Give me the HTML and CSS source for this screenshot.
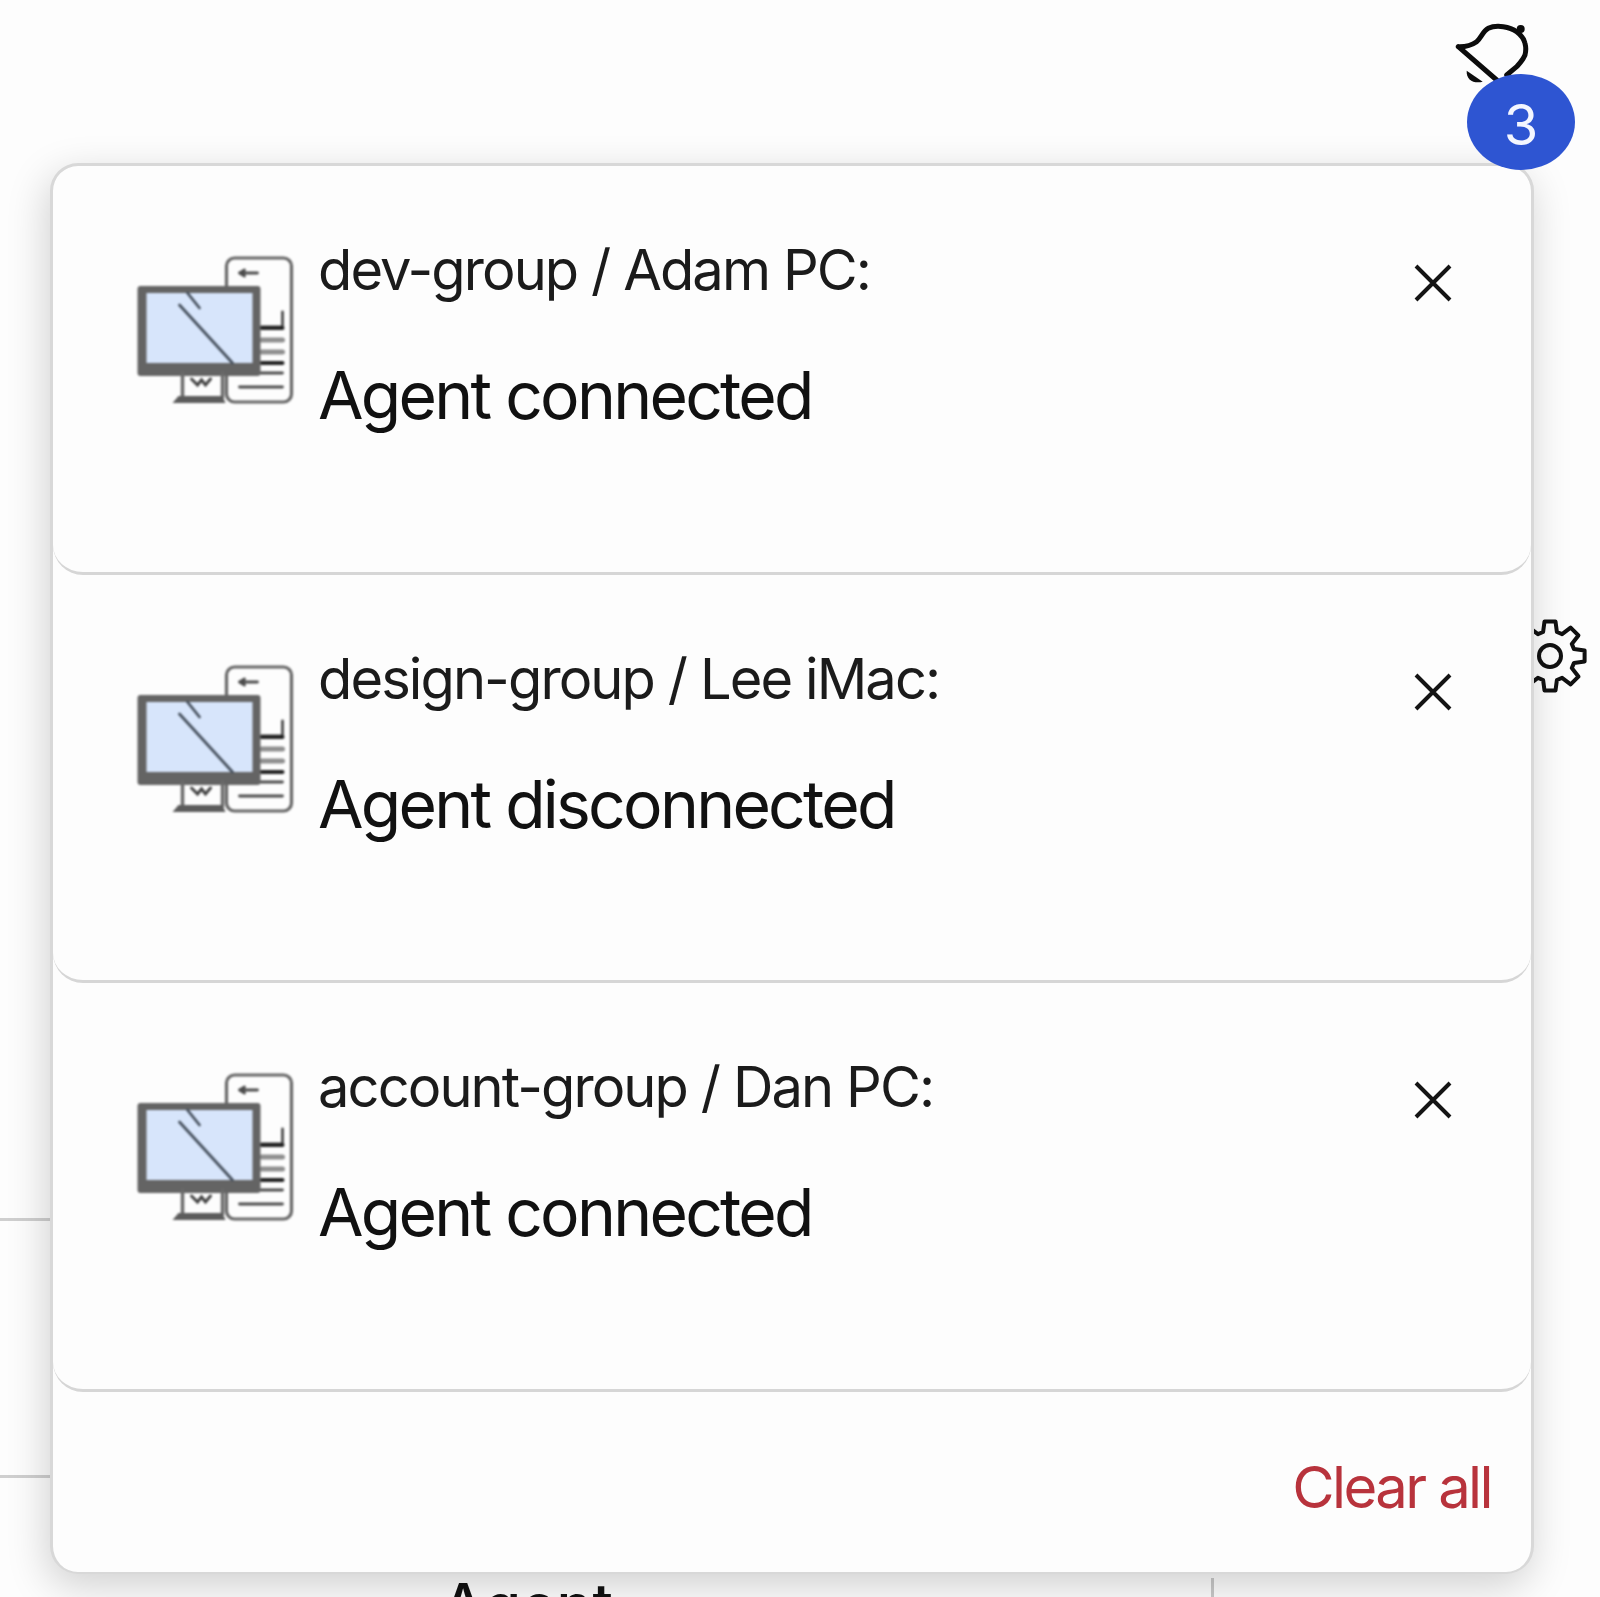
FILE: index.html
```html
<!DOCTYPE html>
<html lang="en">
<head>
<meta charset="utf-8">
<title>Notifications</title>
<link rel="stylesheet" href="styles.css">
</head>
<body>
<svg class="defs" width="0" height="0" aria-hidden="true">
  <defs>
    <symbol id="agent-icon" viewBox="0 0 157 148">
      <rect class="ic-line" x="90" y="2" width="65" height="144" rx="8"/>
      <path class="ic-thin" d="M103 17h18M103 17l5-3M103 17l5 3"/>
      <path class="ic-thin" d="M146 56v15H125"/>
      <path class="ic-slot" d="M125 84h21M125 96h21"/>
      <path class="ic-dark" d="M125 72h21M125 107h21"/>
      <path class="ic-thin" d="M103 117h43M103 131h43"/>
      <rect class="ic-monitor" x="1" y="30" width="123" height="90" rx="3"/>
      <rect class="ic-screen" x="10" y="37" width="106" height="70"/>
      <path class="ic-glare" d="M43 49l53 58M51 37l12 15"/>
      <path class="ic-stand" d="M46 117v24M86 117v24"/>
      <path class="ic-w" d="M55 123l6 6 4-5 4 5 5-6"/>
      <path class="ic-base" d="M42 140h44l3 7H36z"/>
    </symbol>
    <symbol id="close-icon" viewBox="0 0 40 40">
      <path class="x-line" d="M3 3l34 34M37 3L3 37"/>
    </symbol>
  </defs>
</svg>

<div class="page">
  <header class="topbar">
    <div class="bell-wrap">
      <svg class="bell" viewBox="0 0 80 70" aria-hidden="true">
        <path class="bell-line" d="M8.3 26.7C17 27 22 25 26.7 21.7 31 18 33 11 38.3 8.3 43 6 48 6 53.3 6.7 59 7.5 63 9 66.7 11.7 71 15 74 19 75 23.3 76 27 76 31 75 35 73 40 70 43 66.7 46.7L56.7 55M8.3 26.7L46.7 60"/>
        <circle class="bell-fill" cx="70.7" cy="9" r="4"/>
        <path class="bell-fill" d="M16.7 50.7L32.7 61.7C24 64 16 60 16.7 50.7z"/>
      </svg>
      <span class="badge">3</span>
    </div>
  </header>

  <div class="gear-row">
    <svg class="gear" viewBox="-40 -40 80 80" aria-hidden="true">
      <polygon class="gear-line" points="24,-6.9 34.6,-5.5 34.6,5.5 24,6.9 21.8,12.1 28.4,20.6 20.6,28.4 12.1,21.8 6.9,24 5.5,34.6 -5.5,34.6 -6.9,24 -12.1,21.8 -20.6,28.4 -28.4,20.6 -21.8,12.1 -24,6.9 -34.6,5.5 -34.6,-5.5 -24,-6.9 -21.8,-12.1 -28.4,-20.6 -20.6,-28.4 -12.1,-21.8 -6.9,-24 -5.5,-34.6 5.5,-34.6 6.9,-24 12.1,-21.8 20.6,-28.4 28.4,-20.6 21.8,-12.1"/>
      <circle class="gear-line" cx="0" cy="0" r="11"/>
    </svg>
  </div>

  <section class="table">
    <div class="table-row"></div>
    <div class="table-row table-row-last">
      <div class="cell-agent">Agent</div>
      <div class="cell-next"></div>
    </div>
  </section>

  <aside class="panel">
    <article class="note">
      <svg class="agent-icon" aria-hidden="true"><use href="#agent-icon"/></svg>
      <div class="note-text">
        <div class="note-title">dev-group / Adam PC:</div>
        <div class="note-message">Agent connected</div>
      </div>
      <svg class="close" aria-hidden="true"><use href="#close-icon"/></svg>
    </article>
    <article class="note">
      <svg class="agent-icon" aria-hidden="true"><use href="#agent-icon"/></svg>
      <div class="note-text">
        <div class="note-title">design-group / Lee iMac:</div>
        <div class="note-message">Agent disconnected</div>
      </div>
      <svg class="close" aria-hidden="true"><use href="#close-icon"/></svg>
    </article>
    <article class="note">
      <svg class="agent-icon" aria-hidden="true"><use href="#agent-icon"/></svg>
      <div class="note-text">
        <div class="note-title">account-group / Dan PC:</div>
        <div class="note-message">Agent connected</div>
      </div>
      <svg class="close" aria-hidden="true"><use href="#close-icon"/></svg>
    </article>
    <footer class="panel-footer">
      <span class="clear-all">Clear all</span>
    </footer>
  </aside>
</div>
</body>
</html>
```

FILE: styles.css
```css
* { box-sizing: border-box; }
html, body { margin: 0; padding: 0; }
body {
  background: #fdfdfd;
  color: #141414;
  font-family: Inter, "Liberation Sans", sans-serif;
}
.defs { position: absolute; }
.page {
  position: relative;
  width: 1600px;
  height: 1597px;
  overflow: hidden;
  background: #fdfdfd;
  filter: blur(.4px);
}

/* top bar */
.topbar {
  height: 166px;
  display: flex;
  justify-content: flex-end;
  padding: 20px 0 0;
}
.bell-wrap { position: relative; width: 150px; height: 70px; }
.bell { display: block; width: 80px; height: 70px; }
.bell-line {
  fill: none;
  stroke: #0c0c0c;
  stroke-width: 5;
  stroke-linecap: round;
  stroke-linejoin: round;
}
.bell-fill { fill: #0c0c0c; }
.badge {
  position: absolute;
  left: 17px;
  top: 54px;
  width: 108px;
  height: 96px;
  border-radius: 50%;
  background: #2e55d2;
  color: #f4f6ff;
  font-size: 56px;
  line-height: 102px;
  text-align: center;
  z-index: 3;
}

/* settings gear behind the panel */
.gear-row {
  display: flex;
  justify-content: flex-end;
  padding: 450px 10px 0 0;
}
.gear { display: block; width: 80px; height: 80px; }
.gear-line {
  fill: none;
  stroke: #111;
  stroke-width: 4;
  stroke-linejoin: round;
}

/* table behind the panel */
.table { margin-top: 522px; width: 1300px; }
.table-row { height: 257px; border-top: 3px solid #cfcfcf; }
.table-row-last {
  display: grid;
  grid-template-columns: 1211px 1fr;
  padding-top: 97px;
}
.cell-agent {
  font-size: 60px;
  font-weight: 500;
  line-height: 1;
  padding-left: 442px;
  color: #111;
}
.cell-next { border-left: 3px solid #c9c9c9; margin-top: 3px; }

/* notification panel */
.panel {
  position: absolute;
  left: 50px;
  top: 163px;
  width: 1484px;
  height: 1411px;
  background: #fdfdfd;
  border-radius: 28px;
  border: 3px solid #d8d8d8;
  border-bottom-width: 2px;
  box-shadow: -3px 12px 40px rgba(0, 0, 0, .18);
  display: flex;
  flex-direction: column;
  z-index: 2;
}
.note {
  height: 408.5px;
  flex: none;
  display: flex;
  align-items: flex-start;
  padding: 90px 78px 0 83px;
  border-bottom: 3px solid #d6d6d6;
  border-radius: 0 0 30px 30px;
}
.agent-icon { flex: none; width: 158px; height: 148px; filter: blur(.9px); }
.ic-line, .ic-thin, .ic-slot, .ic-dark, .ic-glare, .ic-stand, .ic-w { fill: none; stroke-linecap: round; }
.ic-line { stroke: #666; stroke-width: 3.2; fill: #fdfdfd; }
.ic-thin { stroke: #4c4c4c; stroke-width: 2.8; }
.ic-slot { stroke: #8e8e8e; stroke-width: 5; }
.ic-dark { stroke: #222; stroke-width: 4; }
.ic-monitor { fill: #646464; }
.ic-screen { fill: #d7e5fb; }
.ic-glare { stroke: #47515e; stroke-width: 2.8; }
.ic-stand { stroke: #6a6a6a; stroke-width: 3.5; }
.ic-w { stroke: #444; stroke-width: 3; }
.ic-base { fill: #5c5c5c; }

.note-text { flex: 1; margin-left: 24px; margin-top: -18px; }
.note-title { font-size: 56px; line-height: 64px; letter-spacing: -1.9px; color: #1b1b1b; }
.note-message { font-size: 66px; line-height: 72px; margin-top: 57px; letter-spacing: -2.75px; color: #111; }
.close { flex: none; width: 40px; height: 40px; margin-top: 7px; }
.x-line { fill: none; stroke: #141414; stroke-width: 4; }

.panel-footer {
  flex: 1;
  display: flex;
  justify-content: flex-end;
  align-items: flex-end;
  padding: 0 40px 55px 0;
}
.clear-all { font-size: 58px; line-height: 60px; letter-spacing: -2.6px; color: #b8333c; }
```
